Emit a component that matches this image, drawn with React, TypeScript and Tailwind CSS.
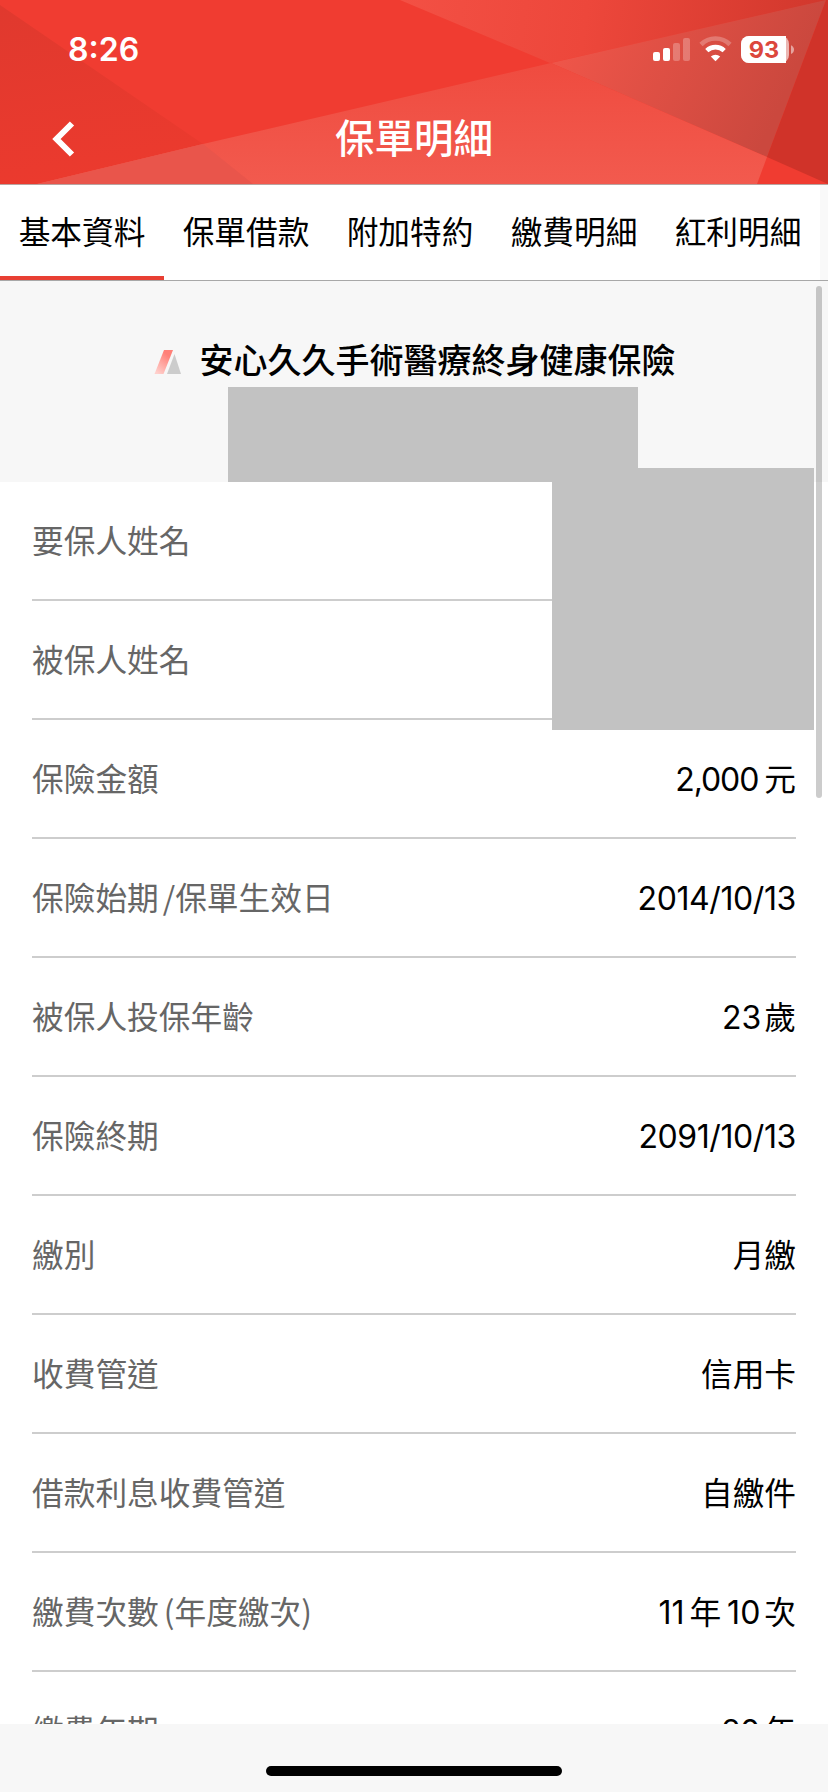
import React, { useState } from 'react';

interface Row {
  label: React.ReactNode;
  value?: React.ReactNode;
}

const tabs = ['基本資料', '保單借款', '附加特約', '繳費明細', '紅利明細'];

const Num: React.FC<{ children: React.ReactNode; className?: string }> = ({ children, className = '' }) => (
  <span className={`font-['Inter'] text-[32px] leading-none ${className}`}>{children}</span>
);

const rows: Row[] = [
  { label: '要保人姓名' },
  { label: '被保人姓名' },
  { label: '保險金額', value: <><Num className="tracking-[-1.1px] mr-[6px]">2,000</Num>元</> },
  { label: <>保險始期<span className="ml-[4px]">/</span>保單生效日</>, value: <Num className="tracking-[-0.4px]">2014/10/13</Num> },
  { label: '被保人投保年齡', value: <><Num className="mr-[3px]">23</Num>歲</> },
  { label: '保險終期', value: <Num className="tracking-[-0.4px]">2091/10/13</Num> },
  { label: '繳別', value: '月繳' },
  { label: '收費管道', value: '信用卡' },
  { label: '借款利息收費管道', value: '自繳件' },
  {
    label: <>繳費次數<span className="ml-[5px]">(</span>年度繳次)</>,
    value: <><Num className="mr-[5px]">11</Num>年<Num className="ml-[6px] mr-[4px]">10</Num>次</>,
  },
  { label: '繳費年期', value: <><Num className="tracking-[-0.8px] mr-[5px]">20</Num>年</> },
];

const StatusIcons: React.FC = () => (
  <svg className="absolute top-[36px] left-[652px]" width="144" height="28" viewBox="652 36 144 28" fill="white">
    <rect x="653" y="52" width="7" height="9" rx="2" />
    <rect x="663" y="48" width="7" height="13" rx="2" />
    <rect x="673" y="43" width="7" height="18" rx="2" opacity="0.25" />
    <rect x="683" y="38" width="7" height="23" rx="2" opacity="0.25" />
    {/* wifi */}
    <path d="M701 45.5a20.5 20.5 0 0 1 29 0" transform="translate(0 -1)" fill="none" stroke="white" strokeOpacity="0.25" strokeWidth="4.6" />
    <path d="M706.8 50.6a12.6 12.6 0 0 1 17.4 0" fill="none" stroke="white" strokeWidth="4.6" />
    <path d="M710.8 56.6a7 7 0 0 1 9.4 0L715.5 61.3z" />
    {/* battery */}
    <rect x="741" y="36" width="48" height="27" rx="8" opacity="0.6" />
    <path d="M749 36h37v27h-37a8 8 0 0 1-8-8v-11a8 8 0 0 1 8-8z" />
    <path d="M791 45.2c4 1.8 4 7 0 8.8z" opacity="0.5" />
    <text x="764" y="58" textAnchor="middle" fontFamily="Inter" fontSize="23.5" fontWeight="700" fill="#dc473c">93</text>
  </svg>
);

const HeaderBackground: React.FC = () => (
  <svg className="absolute inset-0" width="828" height="184" viewBox="0 0 828 184" preserveAspectRatio="none">
    <defs>
      <linearGradient id="left" x1="0" y1="0" x2="0.2" y2="1">
        <stop offset="0" stopColor="#e0392e" />
        <stop offset="1" stopColor="#eb3a2e" />
      </linearGradient>
      <linearGradient id="top" x1="400" y1="0" x2="810" y2="60" gradientUnits="userSpaceOnUse">
        <stop offset="0" stopColor="#f35044" />
        <stop offset="0.45" stopColor="#ed473b" />
        <stop offset="1" stopColor="#d2382d" />
      </linearGradient>
      <linearGradient id="wedge" x1="560" y1="60" x2="760" y2="150" gradientUnits="userSpaceOnUse">
        <stop offset="0" stopColor="#ee5549" />
        <stop offset="1" stopColor="#cb483e" />
      </linearGradient>
      <linearGradient id="bottom" x1="0" y1="60" x2="0" y2="184" gradientUnits="userSpaceOnUse">
        <stop offset="0" stopColor="#ef4b3f" />
        <stop offset="1" stopColor="#f25a4e" />
      </linearGradient>
    </defs>
    <rect width="828" height="184" fill="#f03c31" />
    <path d="M0 5L203 144L37 184H0z" fill="url(#left)" />
    <path d="M400 0H828L550 63z" fill="url(#top)" />
    <path d="M551 63L826 0L767 157z" fill="url(#wedge)" />
    <path d="M826 0H828V184L767 157z" fill="#d03329" />
    <path d="M37 184L203 144L551 63L767 157L757 184z" fill="url(#bottom)" />
    <path d="M37 184L203 144L253 184z" fill="#e9554b" />
  </svg>
);

export default function App() {
  const [active, setActive] = useState(0);

  return (
    <div className="relative flex flex-col w-[828px] h-[1792px] overflow-hidden bg-white text-black font-['Noto_Sans_CJK_TC',sans-serif]">
      <header className="relative h-[185px] shrink-0 flex flex-col border-b border-[#b9a3a0] text-white">
        <HeaderBackground />
        <div className="relative h-[96px] pl-[68px] pt-[29px]">
          <span className="font-['Inter'] text-[32px] leading-[42px] font-semibold">8:26</span>
        </div>
        <StatusIcons />
        <div className="relative flex-1 flex items-center justify-center pb-[8px]">
          <button className="absolute left-[52px] top-[25px]" aria-label="返回">
            <svg width="23" height="36" viewBox="0 0 23 36" fill="none" stroke="white" strokeWidth="6">
              <path d="M20 2.5L4.5 18L20 33.5" />
            </svg>
          </button>
          <h1 className="text-[39.5px] leading-[56px] font-medium">保單明細</h1>
        </div>
      </header>

      <nav className="relative h-[96px] shrink-0 flex border-b border-[#a8a8a8]">
        {tabs.map((tab, i) => (
          <button
            key={tab}
            onClick={() => setActive(i)}
            className={`w-[164px] shrink-0 pb-[1px] text-[31.7px] leading-[46px] border-b-4 ${active === i ? 'border-[#e83f33]' : 'border-transparent'}`}
          >
            {tab}
          </button>
        ))}
        <div className="flex-1 bg-[#f9f9f9]" />
      </nav>

      <main className="relative flex-1 min-h-0 overflow-hidden">
        <section className="h-[201px] bg-[#f7f7f7] flex flex-col items-center">
          <div className="flex items-center h-[106px] pt-[50px] mr-[-1px]">
            <svg className="mr-[18px] mt-[6px]" width="28" height="26" viewBox="0 0 28 26">
              <defs>
                <linearGradient id="mark" x1="0.7" y1="0.2" x2="0.2" y2="1">
                  <stop offset="0" stopColor="#ff8078" />
                  <stop offset="1" stopColor="#ffd0cc" />
                </linearGradient>
              </defs>
              <path d="M10 1H19L9.5 25H0.5z" fill="url(#mark)" />
              <path d="M20.5 5L27 25H13z" fill="#cccccc" />
            </svg>
            <h2 className="text-[34px] leading-[50px] font-medium">安心久久手術醫療終身健康保險</h2>
          </div>
          <div className="w-[410px] h-[95px] mr-[-38px] bg-[#c2c2c2]" />
        </section>

        <dl className="px-[32px]">
          {rows.map((row, i) => (
            <div key={i} className="h-[119px] pb-[4px] flex items-center justify-between border-b-2 border-[#cdcdcd] text-[31.7px] leading-[46px] whitespace-nowrap">
              <dt className="text-[#666666]">{row.label}</dt>
              <dd>{row.value}</dd>
            </div>
          ))}
        </dl>

        {/* masked names */}
        <div className="absolute left-[552px] top-[187px] w-[262px] h-[262px] bg-[#c2c2c2]" />
        <div className="absolute left-[816px] top-[5px] w-[6px] h-[512px] rounded-full bg-black/20" />
      </main>

      <footer className="h-[68px] shrink-0 bg-[#f7f7f7] flex justify-center items-end pb-[16px]">
        <div className="w-[296px] h-[10px] rounded-full bg-black" />
      </footer>
    </div>
  );
}
